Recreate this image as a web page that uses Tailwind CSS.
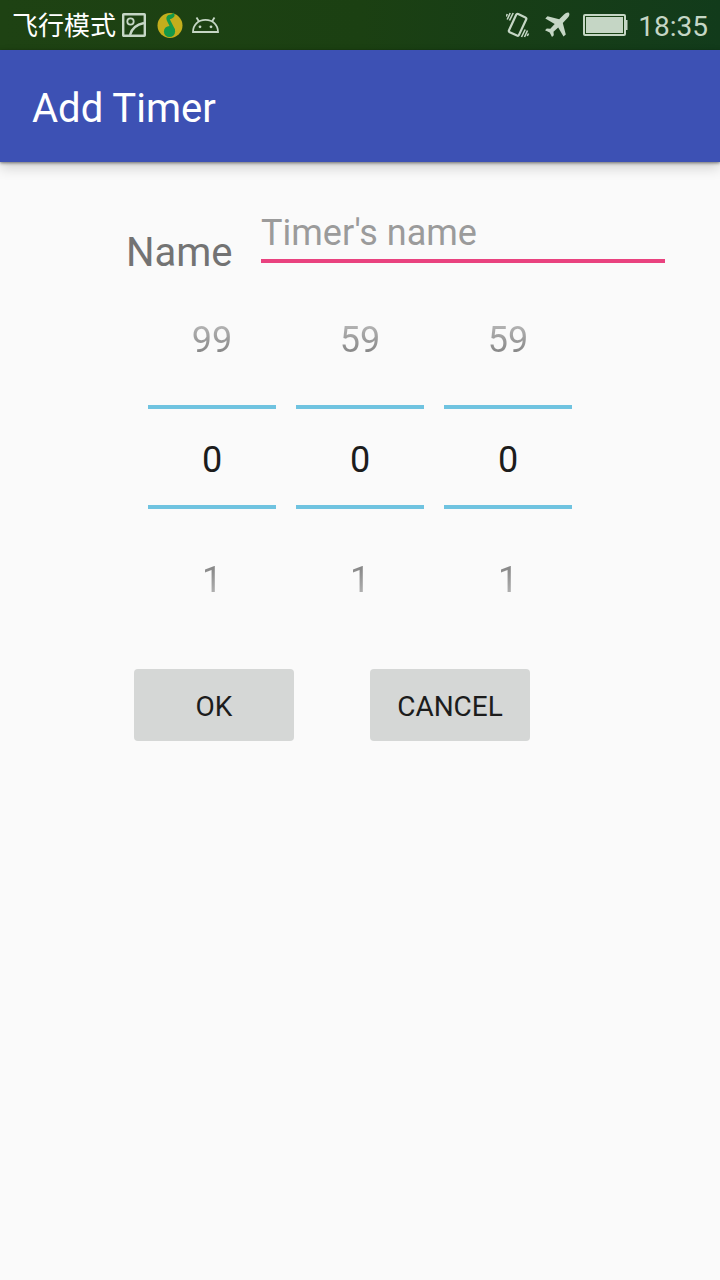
<!DOCTYPE html>
<html lang="en">
<head>
<meta charset="utf-8">
<meta name="viewport" content="width=device-width, initial-scale=1">
<title>Add Timer</title>
<script src="https://cdn.jsdelivr.net/npm/@tailwindcss/browser@4"></script>
</head>
<body class="min-h-screen bg-[#fafafa] font-['Roboto','Noto_Sans_CJK_SC',sans-serif]">
<div class="flex h-[50px] items-center justify-between bg-linear-to-r from-[#1e4213] via-[#1b4012] to-[#123b1b] pl-3 pr-3 text-[#c5d6c5]">
  <div class="flex items-center">
    <span class="pt-0.5 text-[26px] leading-8 text-white" lang="zh">飞行模式</span>
    <svg class="ml-1.5 h-6 w-6" viewBox="0 0 24 24" fill="none" stroke="currentColor" aria-hidden="true">
      <rect x="1.2" y="1.2" width="21.600" height="21.600" rx="0.5" stroke-width="2.400"/>
      <circle cx="8.500" cy="8.500" r="3.200" stroke-width="1.800"/>
      <path d="M8 22C9.500 16 14.500 11.500 22 10" stroke-width="2.400"/>
    </svg>
    <svg class="ml-[11px] h-[26px] w-[26px]" viewBox="0 0 26 26" aria-hidden="true">
      <circle cx="13" cy="13.500" r="12.500" fill="#c3ae1c"/>
      <circle cx="12.500" cy="19.500" r="5.600" fill="#14984a"/>
      <path d="M15.500 20L9.800 8.500C8.500 4.500 10.500 3 13.500 2.500C15.200 2.200 16 1.500 16.500 0.500C18.800 3.500 17.500 6 12.800 7.200L18 17.500L17.800 20Z" fill="#14984a"/>
    </svg>
    <svg class="ml-[9px] h-4 w-[27px]" viewBox="0 0 27 16" fill="none" stroke="currentColor" stroke-width="1.800" aria-hidden="true">
      <path d="M1 15C1 8 6 2.800 13.500 2.800S26 8 26 15Z"/>
      <path d="M7 4.500L4.500 0.500M20 4.500L22.500 0.500"/>
      <circle cx="8" cy="9.800" r="1.400" fill="currentColor" stroke="none"/>
      <circle cx="19" cy="9.800" r="1.400" fill="currentColor" stroke="none"/>
    </svg>
  </div>
  <div class="flex items-center">
    <svg class="h-[26px] w-6" viewBox="0 0 24 26" fill="none" stroke="currentColor" aria-hidden="true">
      <rect x="6" y="2.800" width="11" height="20" rx="1.500" stroke-width="2.200" transform="rotate(25 11.500 13)"/>
      <path d="M7.200 1L3.500 8.500M4.200 1L1.200 7.500M1.300 2L0.200 4.500M15.500 25L19.200 17.500M18.500 25L21.500 18.500M21.300 24L22.500 21.500" stroke-width="1.600"/>
    </svg>
    <svg class="ml-3.5 h-[26px] w-[26px]" viewBox="0 0 26 26" fill="currentColor" aria-hidden="true">
      <path d="M25 1C26 2.200 25.200 4.200 23.500 6L18.800 11L21.800 22.500L19.500 24.500L14.200 15.500L9.500 19.800L9.800 23.200L8 25L5.700 20.500L1 18.200L2.800 16.400L6.300 16.700L10.700 12L1.300 6.500L3.500 4.300L15.200 7.300L20 2.600C21.800 0.900 24 0 25 1Z"/>
    </svg>
    <svg class="ml-[13px] h-[22px] w-[45px]" viewBox="0 0 45 22" fill="currentColor" aria-hidden="true">
      <rect x="0" y="0" width="43" height="22" rx="2"/>
      <rect x="2.500" y="2.500" width="38" height="17" fill="none" stroke="#1b4316" stroke-width="1"/>
      <path d="M43 6H44.500V16H43Z"/>
    </svg>
    <span class="ml-2.5 pt-1 text-[28px] leading-8">18:35</span>
  </div>
</div>
<header class="flex h-28 items-center bg-[#3d51b4] px-8 pt-1.5 shadow-[0_1px_3px_rgba(0,0,0,0.5),0_6px_12px_rgba(0,0,0,0.16)]">
  <h1 class="text-[40px] leading-12 text-white">Add Timer</h1>
</header>
<form class="pt-[45px]">
  <div class="flex items-end pl-[126px] pr-[55px]">
    <label for="name" class="w-[135px] text-[40px] leading-[38px] text-[#737373]">Name</label>
    <input id="name" type="text" placeholder="Timer's name" class="mb-[9px] h-14 min-w-0 flex-1 border-b-4 border-[#e9427f] text-4xl text-[#212121] outline-none placeholder:text-[#9b9b9b]">
  </div>
  <div class="mt-[3px] flex justify-center gap-5 text-4xl">
    <div role="group" aria-label="Hours" class="flex w-32 flex-col">
      <button type="button" class="h-[130px]"><span class="block bg-linear-to-b from-[#bcbcbc] to-[#7c7c7c] bg-clip-text leading-10 text-transparent">99</span></button>
      <input type="text" inputmode="numeric" aria-label="Hours" value="0" class="h-[104px] w-full border-y-4 border-[#6fc3e0] pt-1.5 text-center text-[#1c1c1c] outline-none">
      <button type="button" class="h-[142px]"><span class="block bg-linear-to-b from-[#7c7c7c] to-[#bcbcbc] bg-clip-text leading-10 text-transparent">1</span></button>
    </div>
    <div role="group" aria-label="Minutes" class="flex w-32 flex-col">
      <button type="button" class="h-[130px]"><span class="block bg-linear-to-b from-[#bcbcbc] to-[#7c7c7c] bg-clip-text leading-10 text-transparent">59</span></button>
      <input type="text" inputmode="numeric" aria-label="Minutes" value="0" class="h-[104px] w-full border-y-4 border-[#6fc3e0] pt-1.5 text-center text-[#1c1c1c] outline-none">
      <button type="button" class="h-[142px]"><span class="block bg-linear-to-b from-[#7c7c7c] to-[#bcbcbc] bg-clip-text leading-10 text-transparent">1</span></button>
    </div>
    <div role="group" aria-label="Seconds" class="flex w-32 flex-col">
      <button type="button" class="h-[130px]"><span class="block bg-linear-to-b from-[#bcbcbc] to-[#7c7c7c] bg-clip-text leading-10 text-transparent">59</span></button>
      <input type="text" inputmode="numeric" aria-label="Seconds" value="0" class="h-[104px] w-full border-y-4 border-[#6fc3e0] pt-1.5 text-center text-[#1c1c1c] outline-none">
      <button type="button" class="h-[142px]"><span class="block bg-linear-to-b from-[#7c7c7c] to-[#bcbcbc] bg-clip-text leading-10 text-transparent">1</span></button>
    </div>
  </div>
  <div class="mt-[18px] flex gap-[76px] pl-[134px] text-[28px] text-[#1c1c1c]">
    <button type="submit" class="h-[72px] w-40 rounded bg-[#d5d7d6] pt-1">OK</button>
    <button type="button" class="h-[72px] w-40 rounded bg-[#d5d7d6] pt-1">CANCEL</button>
  </div>
</form>
</body>
</html>
